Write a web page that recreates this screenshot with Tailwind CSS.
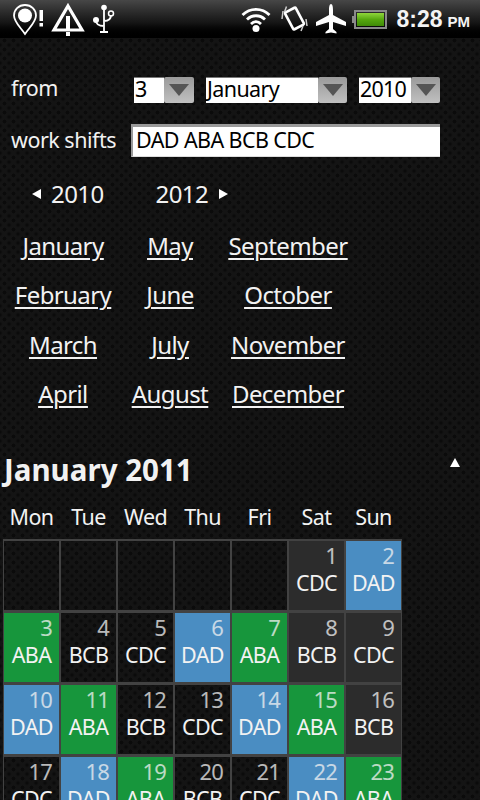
<!DOCTYPE html>
<html>
<head>
<meta charset="utf-8">
<script src="https://cdn.jsdelivr.net/npm/@tailwindcss/browser@4"></script>
</head>
<body class="m-0">
<div class="relative w-[480px] h-[800px] overflow-hidden text-[#f2f2f2] font-['Noto_Sans','Open_Sans',sans-serif] bg-[#141414] bg-[radial-gradient(circle,#0b0b0b_1.6px,transparent_2.2px),radial-gradient(circle,#0b0b0b_1.6px,transparent_2.2px)] bg-[length:9px_9px] bg-[position:0_0,4.5px_4.5px]">
  <!-- status bar -->
  <div class="relative z-10 h-[38px] bg-gradient-to-b from-[#474747] via-[#151515] via-60% to-black flex items-center">
    <svg class="ml-[12px] shrink-0" width="34" height="34" viewBox="0 0 34 34"><path d="M13 3 C6.5 3 2 8 2 13.500 C2 20 9 26 13 32 C17 26 24 20 24 13.500 C24 8 19.500 3 13 3Z" fill="none" stroke="#fff" stroke-width="1.800"/><circle cx="13" cy="13.500" r="7" fill="#fff"/><rect x="27.500" y="8" width="3.500" height="11" fill="#fff"/><rect x="27.500" y="21" width="3.500" height="3.500" fill="#fff"/></svg>
    <svg class="ml-[5px] shrink-0" width="34" height="34" viewBox="0 0 34 34"><path d="M17 4 L31 28 L3 28 Z" fill="none" stroke="#fff" stroke-width="3.200"/><rect x="15" y="14" width="4" height="13" fill="#fff"/><rect x="15" y="30" width="4" height="4" fill="#fff"/></svg>
    <svg class="ml-[7px] shrink-0" width="24" height="30" viewBox="0 0 24 30"><circle cx="12" cy="3.500" r="2.800" fill="#fff"/><path d="M12 4 V28 M8 28 H16 M12 22 C6 22 4 20 4 16 M12 17 C17 17 19 15 19 11" fill="none" stroke="#fff" stroke-width="1.800"/><circle cx="4" cy="16" r="3" fill="#fff"/><circle cx="19" cy="9.500" r="2.500" fill="none" stroke="#fff" stroke-width="1.500"/></svg>
    <div class="ml-auto flex items-center">
      <svg class="shrink-0" width="32" height="28" viewBox="0 0 32 28"><path d="M2.500 10 C10 2.500 22 2.500 29.500 10 M7 14.500 C12 9.500 20 9.500 25 14.500 M11 19 C14 16 18 16 21 19" fill="none" stroke="#fff" stroke-width="2.800"/><circle cx="16" cy="23.500" r="3.500" fill="#fff"/></svg>
      <svg class="ml-[9px] shrink-0" width="28" height="28" viewBox="0 0 28 28"><rect x="7.500" y="4" width="12" height="19" rx="1" transform="rotate(-28 13.500 13.500)" fill="none" stroke="#fff" stroke-width="2.600"/><path d="M2 6 L1 14 M5.500 1.500 L3.500 7 M25 14 L26 21 M22 21 L20 26" stroke="#ccc" stroke-width="1.500"/></svg>
      <svg class="ml-[6px] shrink-0" width="32" height="30" viewBox="0 0 32 30"><path d="M16 0 C17.500 0 18 3 18 6 V11 L31 18 V22 L18 18 V25 L21.500 28 V29.500 L16 28.500 L10.500 29.500 V28 L14 25 V18 L1 22 V18 L14 11 V6 C14 3 14.500 0 16 0Z" fill="#fff"/></svg>
      <div class="ml-[7px] w-[33px] h-[19px] border-2 border-[#8a8a8a] p-[1px] relative"><div class="h-full bg-gradient-to-b from-[#8fd63a] via-[#56a80e] to-[#3f8a08]"></div><div class="absolute -left-[4px] top-[4px] w-[2px] h-[7px] bg-[#8a8a8a]"></div></div>
      <div class="ml-[9px] mr-[10px] flex items-baseline font-bold font-['Liberation_Sans','Noto_Sans',sans-serif] text-[#f4f4f4] leading-none"><span class="text-[23px]">8:28</span><span class="text-[15px] ml-[5px]">PM</span></div>
    </div>
  </div>
  <!-- clipped title hidden under the status bar -->
  <div class="relative -mt-[28px] h-[28px] pl-[4px] text-[28px] leading-[30px] font-bold whitespace-nowrap">Shift calendar 2010</div>

  <!-- form -->
  <div class="relative mt-[39px] h-[26px] flex items-center tracking-[-0.5px]">
    <div class="w-[134px] pl-[11px] pb-[4px] text-[21.500px] leading-none">from</div>
    <div class="flex w-[60px] h-[26px]"><div class="w-[30px] bg-white text-black text-[21.500px] leading-[22px] pl-[1px] border-t border-[#777]">3</div><div class="w-[30px] rounded-[2px] bg-gradient-to-b from-[#9a9a9a] to-[#c0c0c0] flex items-center justify-center"><svg width="20" height="12" viewBox="0 0 20 12"><path d="M0 0H20L10 12Z" fill="#555"/></svg></div></div>
    <div class="ml-[12px] flex w-[141px] h-[26px]"><div class="w-[112px] bg-white text-black text-[21.500px] leading-[22px] tracking-[-0.6px] pl-[1px] border-t border-[#777]">January</div><div class="w-[29px] rounded-[2px] bg-gradient-to-b from-[#9a9a9a] to-[#c0c0c0] flex items-center justify-center"><svg width="20" height="12" viewBox="0 0 20 12"><path d="M0 0H20L10 12Z" fill="#555"/></svg></div></div>
    <div class="ml-[12px] flex w-[81px] h-[26px]"><div class="w-[52px] bg-white text-black text-[21.500px] leading-[22px] tracking-[-0.8px] pl-[1px] border-t border-[#777]">2010</div><div class="w-[29px] rounded-[2px] bg-gradient-to-b from-[#9a9a9a] to-[#c0c0c0] flex items-center justify-center"><svg width="20" height="12" viewBox="0 0 20 12"><path d="M0 0H20L10 12Z" fill="#555"/></svg></div></div>
  </div>
  <div class="mt-[21px] h-[33px] flex items-center tracking-[-0.5px]">
    <div class="w-[131px] pl-[11px] pb-[2px] text-[21.500px] leading-none whitespace-nowrap">work shifts</div>
    <div class="w-[309px] h-[33px] bg-white text-black text-[21.500px] leading-[25px] tracking-[-0.6px] pl-[3px] border-t-[3px] border-l-[2px] border-b-[1px] border-[#999] border-b-[#ddd]">DAD ABA BCB CDC</div>
  </div>
  <div class="mt-[21px] h-[33px] pb-[2px] flex items-center text-[24px] leading-none tracking-[-0.6px]">
    <svg class="ml-[32px]" width="10" height="10" viewBox="0 0 10 10"><path d="M9 0V10L0 5Z" fill="#fff"/></svg>
    <span class="ml-[9px]">2010</span>
    <span class="ml-[52px]">2012</span>
    <svg class="ml-[10px]" width="10" height="10" viewBox="0 0 10 10"><path d="M1 0V10L10 5Z" fill="#fff"/></svg>
  </div>
  <!-- month links -->
  <div class="mt-[10px] w-[362px] grid grid-cols-[126px_88px_148px] auto-rows-[49.500px] text-center text-[24px] tracking-[-0.6px] items-center underline underline-offset-[3px] decoration-[1.500px]">
    <a>January</a><a>May</a><a>September</a>
    <a>February</a><a>June</a><a>October</a>
    <a>March</a><a>July</a><a>November</a>
    <a>April</a><a>August</a><a>December</a>
  </div>
  <!-- month title -->
  <div class="mt-[31px] h-[40px] flex items-center justify-between">
    <div class="pl-[4px] text-[29.500px] font-bold leading-none">January 2011</div>
    <svg class="mr-[20px] -mt-[16px]" width="10" height="9" viewBox="0 0 10 9"><path d="M5 0L10 9H0Z" fill="#fff"/></svg>
  </div>
  <div class="mt-[13px] ml-[3px] w-[399px] grid grid-cols-7 text-center text-[21.500px] tracking-[-0.6px] leading-[28px]">
    <div>Mon</div><div>Tue</div><div>Wed</div><div>Thu</div><div>Fri</div><div>Sat</div><div>Sun</div>
  </div>
  <!-- calendar -->
  <div class="mt-[8px] ml-[3px] w-[399px] grid grid-cols-7 auto-rows-[72px] text-[21.500px] tracking-[-0.6px] leading-[28px] text-center [&>div]:border [&>div]:border-[#424242] [&>div]:border-t-2 [&>div]:px-[4px] [&_b]:block [&_b]:font-normal [&_b]:text-[22px] [&_b]:tracking-[-0.8px] [&_b]:text-right [&_b]:pr-[3px] [&_b]:opacity-75">
    <div></div><div></div><div></div><div></div><div></div>
    <div class="bg-[#2c2c2c]"><b>1</b>CDC</div>
    <div class="bg-[#4a8dc2]"><b>2</b>DAD</div>
    <div class="bg-[#17963c]"><b>3</b>ABA</div>
    <div><b>4</b>BCB</div>
    <div><b>5</b>CDC</div>
    <div class="bg-[#4a8dc2]"><b>6</b>DAD</div>
    <div class="bg-[#17963c]"><b>7</b>ABA</div>
    <div class="bg-[#2c2c2c]"><b>8</b>BCB</div>
    <div class="bg-[#2c2c2c]"><b>9</b>CDC</div>
    <div class="bg-[#4a8dc2]"><b>10</b>DAD</div>
    <div class="bg-[#17963c]"><b>11</b>ABA</div>
    <div><b>12</b>BCB</div>
    <div><b>13</b>CDC</div>
    <div class="bg-[#4a8dc2]"><b>14</b>DAD</div>
    <div class="bg-[#17963c]"><b>15</b>ABA</div>
    <div class="bg-[#2c2c2c]"><b>16</b>BCB</div>
    <div><b>17</b>CDC</div>
    <div class="bg-[#4a8dc2]"><b>18</b>DAD</div>
    <div class="bg-[#17963c]"><b>19</b>ABA</div>
    <div><b>20</b>BCB</div>
    <div><b>21</b>CDC</div>
    <div class="bg-[#4a8dc2]"><b>22</b>DAD</div>
    <div class="bg-[#17963c]"><b>23</b>ABA</div>
  </div>
</div>
</body>
</html>
